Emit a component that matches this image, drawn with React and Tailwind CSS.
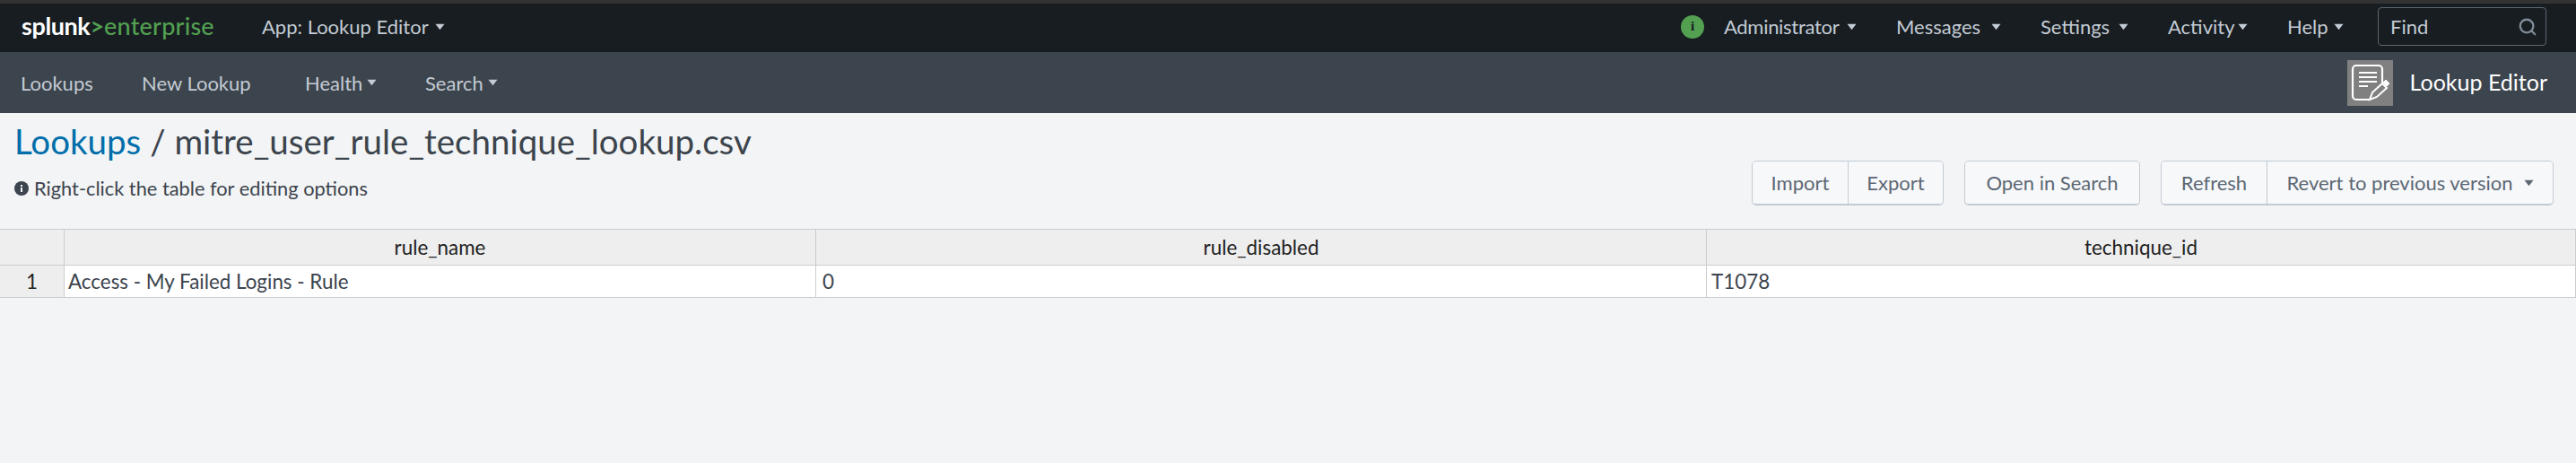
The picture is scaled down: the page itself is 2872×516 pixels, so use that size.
import { Search } from "lucide-react";

function Caret({ className = "" }) {
  return (
    <svg viewBox="0 0 12 8" className={`w-[11px] h-[8px] fill-current shrink-0 ${className}`}>
      <path d="M0.5 0.5h11L6 7.5z" />
    </svg>
  );
}

function TopLink({ label, w, className = "" }) {
  return (
    <div className={`flex items-center text-[#c3cbd4] ${className}`}>
      <span style={{ width: w }} className="whitespace-nowrap">{label}</span>
      <Caret className="ml-[9px]" />
    </div>
  );
}

function LookupIcon() {
  return (
    <div className="w-[51px] h-[51px] bg-[#808080] flex items-center justify-center">
      <svg viewBox="0 0 51 51" className="w-[51px] h-[51px]" fill="none" stroke="white">
        <path d="M25 44H10a4 4 0 0 1-4-4V10a4 4 0 0 1 4-4h25a4 4 0 0 1 4 4v15" strokeWidth="2.2" />
        <path d="M13 14h20M13 19h20M13 24h20M13 29h10" strokeWidth="1.8" />
        <path d="M25 44l3-8 11-10 5 5-11 10z" strokeWidth="2" />
        <path d="M40 25l3-3 4 4-3 3z" fill="white" strokeWidth="1" />
      </svg>
    </div>
  );
}

function Btn({ children, className = "" }) {
  return (
    <div className={`flex items-center justify-center h-[47px] text-[#5c6773] bg-[#f7f8fa] border-[#c3cbd4] ${className}`}>
      {children}
    </div>
  );
}

export default function App() {
  return (
    <div className="w-[2872px] h-[516px] overflow-hidden bg-[#f2f4f5] font-['Lato',sans-serif] text-[22px]">
      <div className="h-[4px] bg-[#333333]" />
      <div className="h-[54px] bg-[#171d21] flex items-center pb-[3px] pl-[24px] pr-[33px]">
        <div className="flex items-baseline text-[27px] w-[268px]">
          <span className="text-white font-bold tracking-[-0.4px]">splunk</span>
          <span className="text-[#53a051] font-bold">&gt;</span>
          <span className="text-[#53a051] font-medium tracking-[0.2px]">enterprise</span>
        </div>
        <div className="flex items-center text-[#c3cbd4]">
          <span>App: Lookup Editor</span>
          <Caret className="ml-[7px]" />
        </div>
        <div className="ml-auto flex items-center">
          <div className="w-[26px] h-[26px] rounded-full bg-[#53a051] text-[#171d21] text-[15px] font-bold font-['Liberation_Serif',serif] flex items-center justify-center mr-[22px]">
            i
          </div>
          <div className="flex items-center gap-[44px] mr-[38px]">
            <TopLink label="Administrator" w={128} className="tracking-[-0.3px]" />
            <TopLink label="Messages" w={97} />
            <TopLink label="Settings" w={78} />
            <TopLink label="Activity" w={69} />
            <TopLink label="Help" w={43} />
          </div>
          <div className="w-[188px] h-[43px] rounded-[4px] border border-[#5c6773] flex items-center justify-between pl-[13px] pr-[9px] text-[#c3cbd4]">
            <span>Find</span>
            <Search size={22} strokeWidth={2.5} className="text-[#818d99]" />
          </div>
        </div>
      </div>
      <div className="h-[68px] bg-[#3c444d] flex items-center pl-[23px] pr-[32px] text-[#c3cbd4]">
        <span className="w-[135px]">Lookups</span>
        <span className="w-[182px]">New Lookup</span>
        <div className="flex items-center w-[134px]">
          <span>Health</span>
          <Caret className="ml-[5px]" />
        </div>
        <div className="flex items-center">
          <span>Search</span>
          <Caret className="ml-[5px]" />
        </div>
        <div className="ml-auto flex items-center">
          <LookupIcon />
          <span className="ml-[19px] text-white text-[25px]">Lookup Editor</span>
        </div>
      </div>
      <div className="relative h-[129px]">
        <div className="pl-[16px] pt-[7px]">
          <div className="text-[38.5px] leading-[48px] text-[#3c444d]">
            <span className="text-[#006eaa]">Lookups</span> / mitre_user_rule_technique_lookup.csv
          </div>
          <div className="mt-[13px] flex items-center gap-[6px] text-[21.8px] text-[#3c444d]">
            <svg viewBox="0 0 16 16" className="w-[16px] h-[16px]">
              <circle cx="8" cy="8" r="8" fill="#3c444d" />
              <rect x="7" y="7" width="2" height="5" fill="#f2f4f5" />
              <rect x="7" y="4" width="2" height="2" fill="#f2f4f5" />
            </svg>
            <span>Right-click the table for editing options</span>
          </div>
        </div>
        <div className="absolute right-[25px] top-[53px] flex gap-[23px]">
          <div className="flex rounded-[5px] border border-[#c3cbd4] border-b-2 overflow-hidden">
            <Btn className="w-[107px] border-r">Import</Btn>
            <Btn className="w-[105px]">Export</Btn>
          </div>
          <div className="flex rounded-[5px] border border-[#c3cbd4] border-b-2 overflow-hidden">
            <Btn className="w-[194px]">Open in Search</Btn>
          </div>
          <div className="flex rounded-[5px] border border-[#c3cbd4] border-b-2 overflow-hidden">
            <Btn className="w-[118px] border-r">Refresh</Btn>
            <Btn className="w-[318px]">
              <span>Revert to previous version</span>
              <Caret className="ml-[12px]" />
            </Btn>
          </div>
        </div>
      </div>
      <div className="grid grid-cols-[72px_838px_993px_969px] text-[#222222] text-[22.4px]">
        <div className="h-[41px] bg-[#eeeeee] border-y border-r border-[#cccccc]" />
        <div className="h-[41px] bg-[#eeeeee] border-y border-r border-[#cccccc] flex items-center justify-center">rule_name</div>
        <div className="h-[41px] bg-[#eeeeee] border-y border-r border-[#cccccc] flex items-center justify-center">rule_disabled</div>
        <div className="h-[41px] bg-[#eeeeee] border-y border-r border-[#cccccc] flex items-center justify-center">technique_id</div>
        <div className="h-[36px] bg-[#eeeeee] border-b border-r border-[#cccccc] flex items-center justify-center">1</div>
        <div className="h-[36px] bg-white border-b border-r border-[#cccccc] flex items-center pl-[4px] text-[#3c444d]">Access - My Failed Logins - Rule</div>
        <div className="h-[36px] bg-white border-b border-r border-[#cccccc] flex items-center pl-[7px] text-[#3c444d]">0</div>
        <div className="h-[36px] bg-white border-b border-r border-[#cccccc] flex items-center pl-[5px] text-[#3c444d]">T1078</div>
      </div>
    </div>
  );
}
